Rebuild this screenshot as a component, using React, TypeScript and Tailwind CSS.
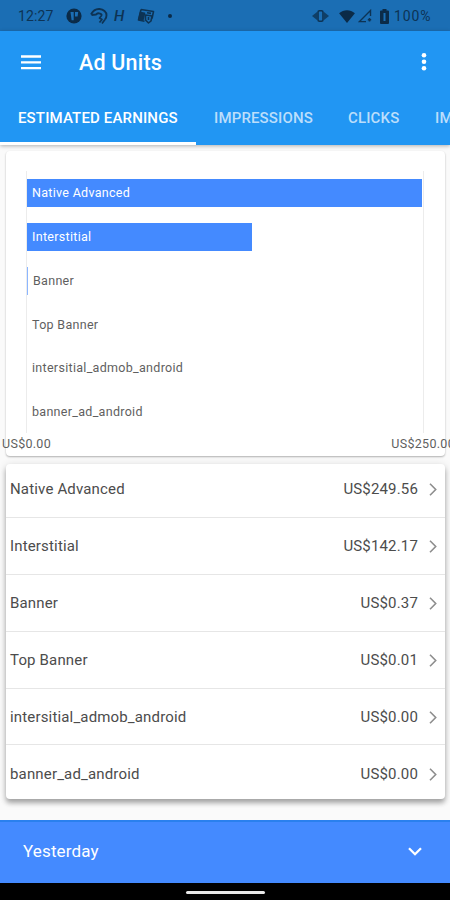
import React from 'react';

const adUnits = [
  { name: 'Native Advanced', value: 249.56 },
  { name: 'Interstitial', value: 142.17 },
  { name: 'Banner', value: 0.37 },
  { name: 'Top Banner', value: 0.01 },
  { name: 'intersitial_admob_android', value: 0 },
  { name: 'banner_ad_android', value: 0 },
];

const CHART_MAX = 250;

function StatusBar() {
  return (
    <div className="flex h-[31px] shrink-0 items-center bg-[#1b6eb4] pl-[18px] pr-[17px] pt-[1px] text-[#0d3354]">
      <span className="w-[48px] text-[14px] leading-none tracking-[0.1px]">12:27</span>
      <svg className="h-[16px] w-[16px]" viewBox="0 0 16 16">
        <circle cx="8" cy="8" r="7.6" fill="#0b2b48" />
        <path d="M4.500 4h3.200v8.300H5.600zM9 4h3.200l-.6 4.600H9z" fill="#1b6eb4" />
      </svg>
      <svg className="ml-[8px] h-[18px] w-[18px]" viewBox="0 0 18 18" fill="none" stroke="currentColor" strokeWidth="1.9" strokeLinejoin="round">
        <path d="M1 7.500C3 3.500 6.500 1.800 9.500 2c4 .3 7 3 7 6.200 0 1.500-.5 3-1.500 4.300" />
        <path d="M1.500 8l4.500-.5c2-1.800 4.500-1.500 6 .5" />
        <path d="M12 8l-2.500 3 2.500 1.500-2.500 3M15 12.500l-3 4" strokeWidth="1.700" />
      </svg>
      <span className="ml-[6px] w-[15px] text-[15px] font-medium italic leading-none">H</span>
      <svg className="ml-[8px] h-[16px] w-[18px]" viewBox="0 0 18 16" fill="none" stroke="currentColor" strokeWidth="1.600" strokeLinejoin="round">
        <path d="M4 1.500l12.500 2-1.500 7M4 1.500l-2.500 10.500 6 1.200" />
        <path d="M3.500 4.500l4 .7-1.500 6.300-4-.5z" fill="currentColor" />
        <path d="M8.500 7l6.500 1-1 5-2.500 2-3-3z" />
        <path d="M10 4.800l4 .6M11.500 9v3" />
      </svg>
      <span className="ml-[13px] h-[4px] w-[4px] rounded-full bg-[#0b2b48]" />

      <div className="ml-auto flex items-center">
        <svg className="mr-[1px] h-[14px] w-[17px]" viewBox="0 0 17 14" fill="none" stroke="currentColor">
          <rect x="6" y="1.700" width="5" height="10.600" rx="1.500" strokeWidth="1.600" />
          <path d="M5 3v8L0 7zM12 3v8l5-4z" fill="currentColor" stroke="none" opacity=".8" />
        </svg>
        <svg className="ml-[9px] h-[13px] w-[16px]" viewBox="0 0 17 14">
          <path d="M0 3.500C5-.8 12-.8 17 3.500L8.500 14z" fill="#0b2b48" />
        </svg>
        <svg className="ml-[3px] h-[14px] w-[14px]" viewBox="0 0 14 14" fill="none" stroke="currentColor" strokeWidth="1.400">
          <path d="M12.500 7V1.500L1.500 12.600H8" />
          <path d="M11.500 9v3.500M9.800 10.700h3.400" strokeWidth="1.600" />
        </svg>
        <svg className="ml-[8px] h-[15px] w-[9px]" viewBox="0 0 9 15">
          <path d="M2.500 0h4v1.500H8q1 0 1 1V14q0 1-1 1H1q-1 0-1-1V2.500q0-1 1-1h1.500z" fill="#0b2b48" />
          <path d="M4.500 4v8" stroke="#1b6eb4" strokeWidth="2" />
        </svg>
        <span className="ml-[5px] w-[39px] whitespace-nowrap text-[14px] leading-none tracking-[0.9px]">100%</span>
      </div>
    </div>
  );
}

function AppBar() {
  return (
    <header className="h-[114px] shrink-0 overflow-hidden bg-[#2196f3] text-white">
      <div className="flex h-[62px] items-center pl-[21px] pr-[23px]">
        <svg className="h-[15px] w-[20px]" viewBox="0 0 20 15">
          <path d="M0 1.500h20M0 7.300h20M0 13.100h20" stroke="white" strokeWidth="2.300" />
        </svg>
        <h1 className="ml-[38px] pt-[2px] text-[21.500px] font-medium leading-none tracking-[0.2px]">Ad Units</h1>
        <svg className="ml-auto h-[18px] w-[6px]" viewBox="0 0 6 18" fill="white">
          <circle cx="3" cy="2.300" r="2.300" />
          <circle cx="3" cy="8.800" r="2.300" />
          <circle cx="3" cy="15.300" r="2.300" />
        </svg>
      </div>
      <nav className="flex h-[52px] whitespace-nowrap text-[15px] font-medium leading-none tracking-[0.15px]">
        <div className="w-[196px] shrink-0 border-b-[3px] border-white pl-[18px] pt-[18px]">ESTIMATED EARNINGS</div>
        <div className="w-[134px] shrink-0 pl-[18px] pt-[18px] text-[#bbdefb]">IMPRESSIONS</div>
        <div className="w-[88px] shrink-0 pl-[18px] pt-[18px] text-[#bbdefb]">CLICKS</div>
        <div className="shrink-0 pl-[17px] pt-[18px] text-[#bbdefb]">IMPRESSION RPM</div>
      </nav>
    </header>
  );
}

function EarningsChart() {
  return (
    <section className="ml-[6px] mr-[5px] mt-[6px] h-[305px] shrink-0 rounded-[4px] bg-white pt-[20px] shadow-[0_1px_2px_rgba(0,0,0,0.3)]">
      <div className="ml-[20px] h-[262px] w-[398px] border-x border-[#ececec] pt-[8px]">
        {adUnits.map((unit) => {
          const percent = (unit.value / CHART_MAX) * 100;
          return (
            <div key={unit.name} className="mb-[15.800px] grid h-[28px] items-center text-[12.500px] leading-none">
              {unit.value > 0.1 && (
                <div
                  className={`col-start-1 row-start-1 h-full min-w-[1px] ${percent > 10 ? 'bg-[#448aff]' : 'bg-[#8cb6ff]'}`}
                  style={{ width: `${percent}%` }}
                />
              )}
              <span className={`col-start-1 row-start-1 pt-px tracking-[0.3px] ${percent > 10 ? 'pl-[5px] text-white' : percent > 0.1 ? 'pl-[6px] text-[#5f5f5f]' : 'pl-[5px] text-[#5f5f5f]'}`}>
                {unit.name}
              </span>
            </div>
          );
        })}
      </div>
      <div className="-ml-[4px] -mr-[5px] mt-[4px] flex justify-between whitespace-nowrap text-[12.500px] leading-[13px] tracking-[0.3px] text-[#5f5f5f]">
        <span>US$0.00</span>
        <span className="-mr-[5px]">US$250.00</span>
      </div>
    </section>
  );
}

function UnitList() {
  return (
    <section className="ml-[6px] mr-[5px] mt-[8px] h-[335px] shrink-0 rounded-[4px] bg-white shadow-[0_4px_5px_rgba(0,0,0,0.3),0_1px_8px_rgba(0,0,0,0.12)]">
      <ul className="-mt-[3px] text-[15px] leading-none tracking-[0.16px] text-[#4c4c4c]">
        {adUnits.map((unit) => (
          <li key={unit.name} className="flex h-[56.900px] items-center border-b border-[#e6e6e6] pl-[4px] pr-[8px] pt-[2px] last:border-0">
            <span>{unit.name}</span>
            <span className="ml-auto">US${unit.value.toFixed(2)}</span>
            <svg className="-mt-px ml-[11px] h-[13px] w-[8px]" viewBox="0 0 8 13" fill="none" stroke="#8e8e8e" strokeWidth="1.600">
              <path d="M1 .8l5.700 5.700L1 12.200" />
            </svg>
          </li>
        ))}
      </ul>
    </section>
  );
}

function App() {
  return (
    <div className="flex h-[900px] w-[450px] flex-col overflow-hidden bg-[#fafafa] font-[Roboto,sans-serif]">
      <StatusBar />
      <div className="z-10 shadow-[0_1px_4px_rgba(0,0,0,0.3)]">
        <AppBar />
      </div>
      <EarningsChart />
      <UnitList />
      <div className="mt-auto flex h-[63px] shrink-0 items-center justify-between border-t-2 border-[#2a80ee] bg-[#448aff] pb-[2px] pl-[23px] pr-[28px] text-[17px] leading-none text-white">
        <span className="tracking-[0.15px]">Yesterday</span>
        <svg className="h-[9px] w-[14px]" viewBox="0 0 14 9" fill="none" stroke="white" strokeWidth="2.300">
          <path d="M1 1.200l6 6 6-6" />
        </svg>
      </div>
      <div className="flex h-[17px] shrink-0 justify-center bg-black pt-[8px]">
        <div className="h-[3px] w-[79px] rounded-full bg-[#e8e8e8]" />
      </div>
    </div>
  );
}

export default App;
